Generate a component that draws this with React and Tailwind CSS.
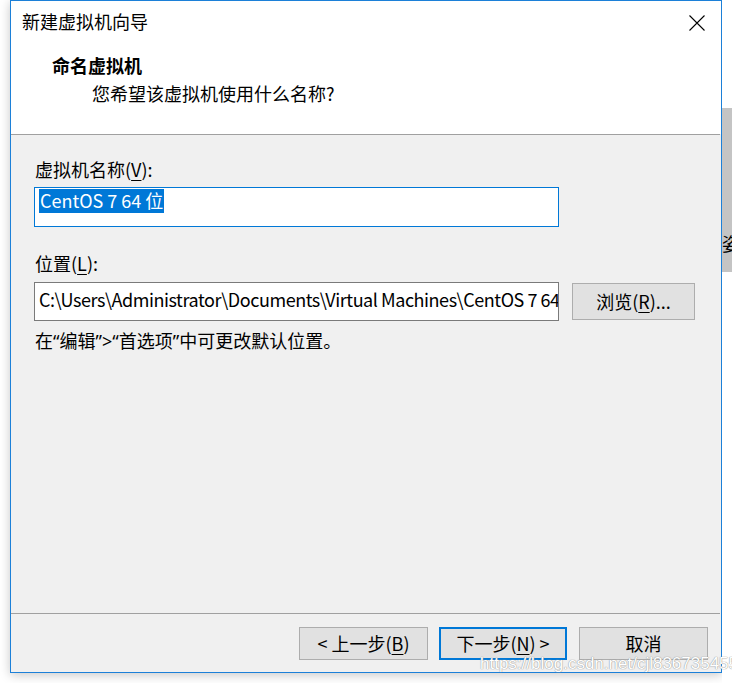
import React from "react";

const F = { fontFamily: '"Noto Sans CJK SC", "Noto Sans", sans-serif' };
const Q = { fontFamily: '"Noto Sans", sans-serif' };

function U({ children }) {
  return <span className="underline underline-offset-[3px] decoration-1">{children}</span>;
}

export default function App() {
  return (
    <div
      className="relative w-[732px] h-[683px] bg-white flex overflow-hidden text-[18px] text-black"
      style={F}
    >
      <div className="w-[10px] shrink-0" />
      <div className="w-[712px] h-[673px] shrink-0 border border-[#1c80d8] flex flex-col bg-[#f0f0f0] shadow-[0_2px_10px_rgba(0,0,0,0.22)]">
        {/* header */}
        <div className="h-[133px] bg-white flex flex-col">
          <div className="flex justify-between items-center pl-[11px] pr-[16px] pt-[8px] h-[32px] leading-[24px]">
            <span>新建虚拟机向导</span>
            <svg width="16" height="16" viewBox="0 0 16 16" className="mt-[3px]">
              <path d="M0.5 0.5 L15.5 15.5 M15.5 0.5 L0.5 15.5" stroke="#000" strokeWidth="1.1" fill="none" />
            </svg>
          </div>
          <div className="pl-[41px] mt-[20px] leading-[24px] font-bold">命名虚拟机</div>
          <div className="pl-[81px] mt-[4px] leading-[24px]">您希望该虚拟机使用什么名称?</div>
        </div>
        <div className="h-px bg-[#a0a0a0] mr-[1px]" />
        {/* body */}
        <div className="h-[478px] flex flex-col pl-[23px]">
          <div className="mt-[22px] leading-[24px] pl-[1px]">
            虚拟机名称(<U>V</U>):
          </div>
          <div className="mt-[6px] w-[525px] h-[40px] border border-[#0078d7] bg-white flex items-start pl-[4px] pt-[1px]">
            <span className="bg-[#0078d7] text-white leading-[24px] h-[24px] px-[1px] flex items-start">
              <span className="-mt-[1px]">CentOS 7 64 位</span>
            </span>
          </div>
          <div className="mt-[24px] leading-[24px] pl-[1px]">
            位置(<U>L</U>):
          </div>
          <div className="mt-[7px] flex items-center gap-[13px]">
            <div className="w-[525px] h-[39px] border border-[#7a7a7a] bg-white flex items-center pl-[4px] pb-[5px] overflow-hidden whitespace-nowrap">
              <span className="leading-[24px] tracking-[-0.45px]">
                C:\Users\Administrator\Documents\Virtual Machines\CentOS 7 64 位
              </span>
            </div>
            <div className="w-[123px] h-[37px] border border-[#adadad] bg-[#e1e1e1] flex items-center justify-center leading-[24px] pb-[2px]">
              浏览(<U>R</U>)...
            </div>
          </div>
          <div className="mt-[7px] leading-[24px] pl-[1px]">
            在<span style={Q}>“</span>编辑<span style={Q}>”&gt;“</span>首选项<span style={Q}>”</span>中可更改默认位置。
          </div>
        </div>
        <div className="h-px bg-[#a0a0a0] mr-[1px]" />
        {/* footer */}
        <div className="h-[58px] flex justify-end items-start pt-[13px] pr-[13px]">
          <div className="w-[129px] h-[33px] mr-[11px] border border-[#adadad] bg-[#e1e1e1] flex items-center justify-center leading-[24px] pb-[2px]">
            &lt; 上一步(<U>B</U>)
          </div>
          <div className="w-[128px] h-[33px] mr-[12px] border-2 border-[#0078d7] bg-[#e1e1e1] flex items-center justify-center leading-[24px] pb-[2px]">
            下一步(<U>N</U>) &gt;
          </div>
          <div className="w-[129px] h-[33px] border border-[#adadad] bg-[#e1e1e1] flex items-center justify-center leading-[24px] pb-[2px]">
            取消
          </div>
        </div>
      </div>
      {/* background window strip */}
      <div className="w-[10px] shrink-0 flex flex-col">
        <div className="h-[108px] bg-white" />
        <div className="h-[164px] bg-[#c4c4c4] overflow-hidden flex flex-col">
          <div className="mt-[123px] leading-[24px] whitespace-nowrap">姿</div>
        </div>
        <div className="flex-1 bg-white" />
      </div>
      {/* watermark */}
      <div
        className="absolute left-[480px] top-[654px] text-[17px] leading-[20px] text-white whitespace-nowrap [text-shadow:0_0_1px_#888,0_0_1px_#aaa]"
        style={{ fontFamily: '"Liberation Sans", Arial, sans-serif' }}
      >
        https://blog.csdn.net/cjl836735455
      </div>
    </div>
  );
}
